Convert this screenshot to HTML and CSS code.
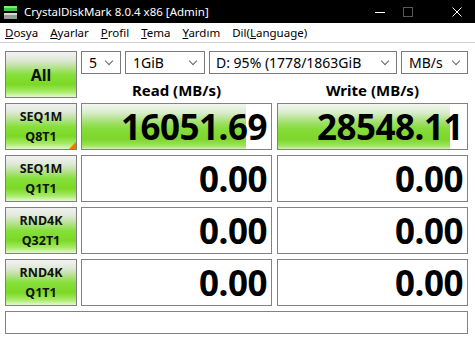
FILE: index.html
```html
<!DOCTYPE html>
<html>
<head>
<meta charset="utf-8">
<link rel="stylesheet" href="styles.css">
</head>
<body>
<div class="window">
  <div class="titlebar">
    <svg class="appicon" width="16" height="16" viewBox="0 0 16 16">
      <rect x="2" y="2" width="13" height="5" fill="#3cc83c"/>
      <rect x="2" y="2" width="13" height="2" fill="#7ee87e"/>
      <rect x="2" y="9" width="13" height="6" fill="#9a9a9a"/>
      <rect x="2" y="9" width="13" height="2" fill="#d8d8d8"/>
      <rect x="11" y="12" width="2" height="1" fill="#3cc83c"/>
    </svg>
    <span class="title">CrystalDiskMark 8.0.4 x86 [Admin]</span>
    <div class="controls">
      <span class="ctl min"><svg width="10" height="10" viewBox="0 0 10 10"><line x1="0" y1="5.5" x2="10" y2="5.5" stroke="#fff" stroke-width="1"/></svg></span>
      <span class="ctl max"><svg width="10" height="10" viewBox="0 0 10 10"><rect x="0.5" y="0.5" width="9" height="9" fill="none" stroke="#5a5a5a" stroke-width="1"/></svg></span>
      <span class="ctl close"><svg width="10" height="10" viewBox="0 0 10 10"><path d="M0.5 0.5 L9.5 9.5 M9.5 0.5 L0.5 9.5" stroke="#fff" stroke-width="1"/></svg></span>
    </div>
  </div>
  <div class="menubar">
    <span class="mi"><u>D</u>osya</span>
    <span class="mi"><u>A</u>yarlar</span>
    <span class="mi"><u>P</u>rofil</span>
    <span class="mi"><u>T</u>ema</span>
    <span class="mi"><u>Y</u>ardım</span>
    <span class="mi">Dil(<u>L</u>anguage)</span>
  </div>
  <div class="main">
    <div class="top">
      <div class="btn all">All</div>
      <div class="topright">
        <div class="combos">
          <div class="combo c1"><span>5</span><i class="chev"></i></div>
          <div class="combo c2"><span>1GiB</span><i class="chev"></i></div>
          <div class="combo c3"><span>D: 95% (1778/1863GiB</span><i class="chev"></i></div>
          <div class="combo c4"><span>MB/s</span><i class="chev"></i></div>
        </div>
        <div class="heads">
          <div class="head">Read (MB/s)</div>
          <div class="head">Write (MB/s)</div>
        </div>
      </div>
    </div>
    <div class="row">
      <div class="btn label sel"><span>SEQ1M</span><span>Q8T1</span></div>
      <div class="cell read"><div class="bar" style="width:87%"></div><span class="val">16051.69</span></div>
      <div class="cell write"><div class="bar" style="width:91%"></div><span class="val">28548.11</span></div>
    </div>
    <div class="row">
      <div class="btn label"><span>SEQ1M</span><span>Q1T1</span></div>
      <div class="cell read"><span class="val">0.00</span></div>
      <div class="cell write"><span class="val">0.00</span></div>
    </div>
    <div class="row">
      <div class="btn label"><span>RND4K</span><span>Q32T1</span></div>
      <div class="cell read"><span class="val">0.00</span></div>
      <div class="cell write"><span class="val">0.00</span></div>
    </div>
    <div class="row">
      <div class="btn label"><span>RND4K</span><span>Q1T1</span></div>
      <div class="cell read"><span class="val">0.00</span></div>
      <div class="cell write"><span class="val">0.00</span></div>
    </div>
    <div class="status"></div>
  </div>
</div>
</body>
</html>
```
FILE: styles.css
```css
html, body {
  margin: 0;
  padding: 0;
  background: #ffffff;
}
.window {
  width: 475px;
  height: 341px;
  overflow: hidden;
  font-family: "Noto Sans", "Open Sans", sans-serif;
  color: #000;
}
.titlebar {
  height: 23px;
  background: #000;
  display: flex;
  align-items: center;
  color: #fff;
}
.appicon {
  margin-left: 2px;
  margin-right: 6px;
}
.title {
  font-size: 11.5px;
}
.controls {
  margin-left: auto;
  margin-right: 13px;
  display: flex;
  align-items: center;
  height: 23px;
}
.ctl {
  display: flex;
  align-items: center;
}
.max { margin-left: 18px; }
.close { margin-left: 39px; }
.menubar {
  height: 19px;
  border-bottom: 1px solid #d0d0d0;
  display: flex;
  align-items: center;
  padding-left: 5px;
  font-size: 11.5px;
}
.mi {
  margin-right: 12px;
}
.mi u {
  text-underline-offset: 1px;
}
.main {
  padding: 8px 0 0 5px;
  display: flex;
  flex-direction: column;
}
.top {
  display: flex;
  height: 52px;
}
.btn {
  box-sizing: border-box;
  width: 72px;
  height: 47px;
  border: 1px solid #7f7f7f;
  background: linear-gradient(to bottom, #f2f2f2 0%, #dfe9d8 18%, #ace07e 38%, #86e03a 50%, #7cd826 72%, #a6ea64 88%, #e4f9d0 100%);
  font-weight: bold;
  color: #111;
  display: flex;
  align-items: center;
  justify-content: center;
  position: relative;
}
.all {
  font-size: 16px;
}
.topright {
  margin-left: 4px;
  width: 387px;
  display: flex;
  flex-direction: column;
}
.combos {
  display: flex;
  gap: 4px;
  height: 23px;
}
.combo {
  box-sizing: border-box;
  height: 23px;
  border: 1px solid #7a7a7a;
  background: #fff;
  display: flex;
  align-items: center;
  font-size: 14px;
  padding-left: 7px;
  position: relative;
  overflow: hidden;
  white-space: nowrap;
}
.c1 { width: 40px; }
.c2 { width: 80px; }
.c3 { width: 188px; padding-left: 6px; }
.c4 { width: 67px; }
.chev {
  position: absolute;
  right: 8px;
  top: 6px;
  width: 5px;
  height: 5px;
  border-right: 1px solid #666;
  border-bottom: 1px solid #666;
  transform: rotate(45deg);
  background: #fff;
  box-shadow: 4px 4px 0 6px #fff;
}
.heads {
  display: flex;
  height: 29px;
}
.head {
  width: 191px;
  text-align: center;
  font-weight: bold;
  font-size: 15px;
  line-height: 29px;
  padding-top: 2px;
  box-sizing: border-box;
}
.head + .head {
  margin-left: 5px;
}
.row {
  display: flex;
  height: 47px;
  margin-bottom: 5px;
}
.label {
  flex-direction: column;
  font-size: 12.5px;
  line-height: 20px;
}
.sel::after {
  content: "";
  position: absolute;
  right: 0;
  bottom: 0;
  width: 0;
  height: 0;
  border-left: 7px solid transparent;
  border-bottom: 7px solid #f07800;
}
.cell {
  box-sizing: border-box;
  width: 191px;
  height: 47px;
  border: 1px solid #828282;
  background: #fff;
  position: relative;
  display: flex;
  align-items: center;
  justify-content: flex-end;
  padding-right: 4px;
}
.read { margin-left: 4px; }
.write { margin-left: 5px; }
.bar {
  position: absolute;
  left: 0;
  top: 0;
  bottom: 0;
  background: linear-gradient(to bottom, #f4f7f2 0%, #d8ecca 20%, #a4e070 40%, #86dc3a 55%, #7ed62c 78%, #9be25a 92%, #d0f2b0 100%);
}
.val {
  position: relative;
  font-weight: bold;
  font-size: 35px;
  line-height: 45px;
  letter-spacing: -0.5px;
}
.status {
  box-sizing: border-box;
  width: 463px;
  height: 23px;
  border: 1px solid #828282;
}
```
